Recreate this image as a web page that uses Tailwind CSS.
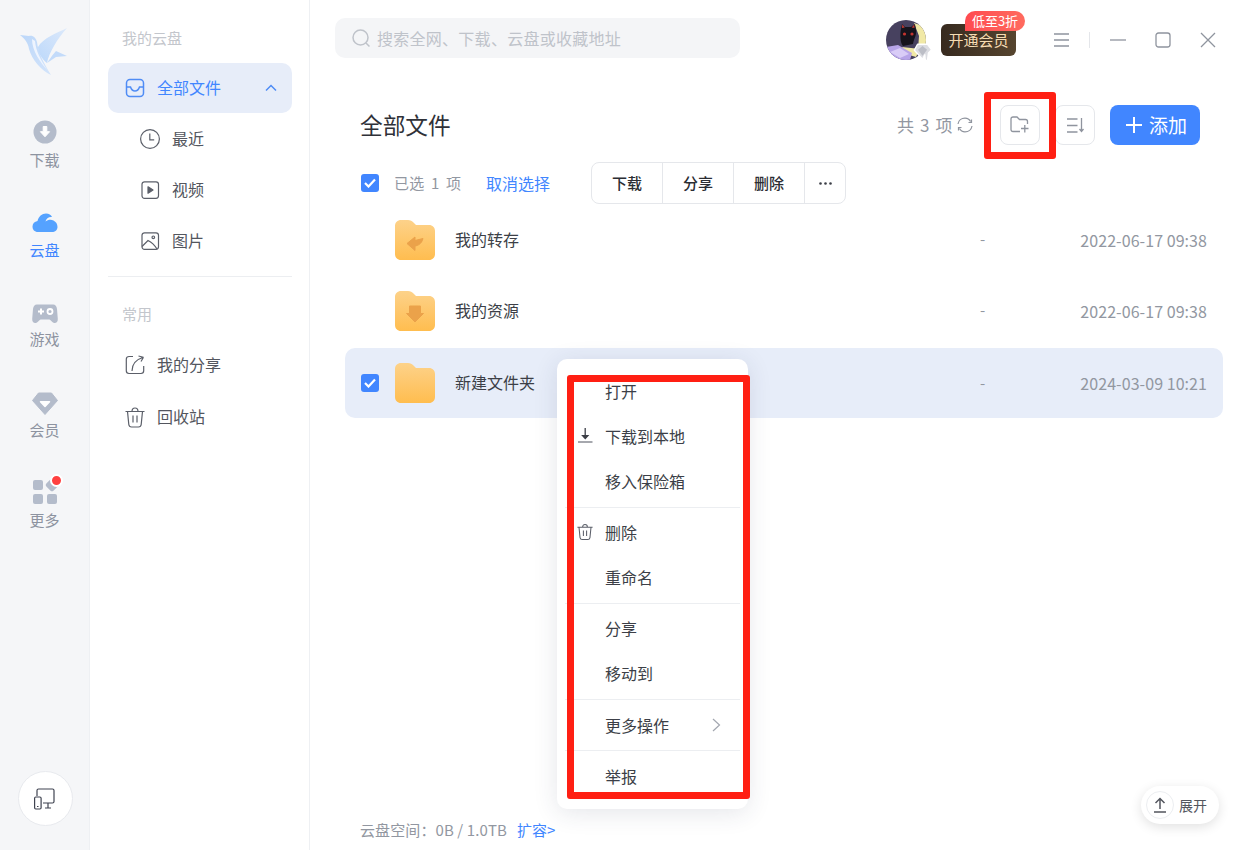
<!DOCTYPE html>
<html lang="zh-CN">
<head>
<meta charset="UTF-8">
<title>云盘</title>
<script src="https://cdn.jsdelivr.net/npm/@tailwindcss/browser@4"></script>
</head>
<body class="bg-white font-['Noto_Sans_CJK_SC','Liberation_Sans',sans-serif] text-[#3c3f47] overflow-hidden">
<div class="relative flex w-[1250px] h-[850px] overflow-hidden">

  <!-- Left rail -->
  <aside class="w-[90px] shrink-0 h-full bg-[#f5f6f8] border-r border-[#eef0f3] flex flex-col items-center">
    <svg class="mt-[27px] ml-[-1px]" width="50" height="50" viewBox="0 0 50 50">
      <defs>
        <linearGradient id="bw" x1="1" y1="0" x2="0" y2="1"><stop offset="0" stop-color="#dce9fb"/><stop offset="1" stop-color="#bcd8fa"/></linearGradient>
        <linearGradient id="bb" x1="0" y1="0" x2="1" y2="1"><stop offset="0" stop-color="#bcd7f9"/><stop offset="1" stop-color="#d3e4fb"/></linearGradient>
      </defs>
      <path d="M1 8 L10 9 C14 8 17 11 18 15 C19 25 25 37 32 48 C22 43 13 33 10 22 C9 16 6 12 1 8Z" fill="url(#bb)"/>
      <path d="M13 12 C13 24 21 35 29 44 C21 32 17 24 16 14Z" fill="#eef4fe"/>
      <path d="M48 1 C38 6 24 11 19 20 C19 26 23 32 28 36 C30 26 38 12 48 1Z" fill="url(#bw)"/>
      <path d="M28 36 C32 30 35 26 37 24 L48 29 L37 30 Z" fill="#c3dbfa"/>
    </svg>

    <a class="mt-[39px] w-full h-[90px] flex flex-col items-center text-[#8d93a0]">
      <svg class="mt-[4px]" width="24" height="24" viewBox="0 0 24 24"><circle cx="12" cy="12" r="11.500" fill="#b4bccb"/><path d="M10.200 6.500h3.600v5.200h2.800L12 16.800l-4.600-5.100h2.800z" fill="#fff" stroke="#fff" stroke-linejoin="round"/></svg>
      <span class="mt-[5px] text-[15px] leading-[22px]">下载</span>
    </a>
    <a class="w-full h-[90px] flex flex-col items-center text-[#4186ff]">
      <svg class="mt-[6px]" width="26" height="22" viewBox="0 0 26 22"><path d="M6 20 C2.500 20 0.500 17.500 0.500 14.500 C0.500 11.500 2.500 9.500 5.500 9 C6.500 4.500 10 1.500 14 1.500 C17 1.500 19 3 20 5 C17 4.500 14 6.500 13.500 9.500 C16 7.500 19 7 21.500 8.500 C24 9.800 25.500 12 25.500 15 C25.500 18 23 20 20 20Z" fill="#55a2ff"/></svg>
      <span class="mt-[5px] text-[15px] leading-[22px]">云盘</span>
    </a>
    <a class="w-full h-[90px] flex flex-col items-center text-[#8d93a0]">
      <svg class="mt-[7px]" width="26" height="22" viewBox="0 0 26 22"><path d="M5 1.500 H21 C23.500 1.500 24.500 3 25 6 L25.800 16 C26 19 24 20.500 22 20 C20 19.500 19 17 17.500 16.500 H8.500 C7 17 6 19.500 4 20 C2 20.500 0 19 .2 16 L1 6 C1.500 3 2.500 1.500 5 1.500Z" fill="#b4bccb"/><path d="M6 8.500h6M9 5.500v6" stroke="#fff" stroke-width="2"/><circle cx="18" cy="8.500" r="2.500" fill="none" stroke="#fff" stroke-width="1.800"/></svg>
      <span class="mt-[3px] text-[15px] leading-[22px]">游戏</span>
    </a>
    <a class="w-full h-[90px] flex flex-col items-center text-[#8d93a0]">
      <svg class="mt-[6px]" width="26" height="23" viewBox="0 0 26 23"><path d="M6.500 1 H19.500 L25.500 8.500 L13 22.500 L.5 8.500Z" fill="#b4bccb" stroke="#b4bccb" stroke-linejoin="round"/><path d="M13 14.500 L8.500 9.800 H17.500Z" fill="#fff" stroke="#fff" stroke-width="1.500" stroke-linejoin="round"/></svg>
      <span class="mt-[4px] text-[15px] leading-[22px]">会员</span>
    </a>
    <a class="w-full h-[90px] flex flex-col items-center text-[#8d93a0]">
      <div class="relative w-[24px] h-[24px] mt-[4px] grid grid-cols-2 gap-[4px]">
        <i class="block w-[10px] h-[10px] rounded-[2px] bg-[#b4bccb]"></i>
        <i class="block w-[10px] h-[10px] rounded-[2px] bg-[#b4bccb] rotate-45"></i>
        <i class="block w-[10px] h-[10px] rounded-[2px] bg-[#b4bccb]"></i>
        <i class="block w-[10px] h-[10px] rounded-[2px] bg-[#b4bccb]"></i>
        <b class="absolute right-[-6px] top-[-6px] w-[9px] h-[9px] rounded-full bg-[#ff4040] border-[2px] border-white box-content"></b>
      </div>
      <span class="mt-[5px] text-[15px] leading-[22px]">更多</span>
    </a>

    <div class="mt-auto mb-[24px] ml-[1px] w-[55px] h-[55px] rounded-full bg-white border border-[#e8eaee] flex items-center justify-center">
      <svg width="22" height="22" viewBox="0 0 22 22" fill="none" stroke="#3f4350" stroke-width="1.200"><path d="M3 8V2.500C3 1.700 3.600 1 4.500 1h14c.8 0 1.500.7 1.500 1.500v11c0 .8-.7 1.500-1.500 1.500H9"/><path d="M11 20h6M14 15v5"/><rect x="0.600" y="9" width="6.500" height="12" rx="1.200"/><path d="M3 18.500h1.500"/></svg>
    </div>
  </aside>

  <!-- Second sidebar -->
  <aside class="w-[220px] shrink-0 h-full border-r border-[#eef0f3] pl-[18px] pr-[17px]">
    <div class="h-[63px] pl-[14px] pt-[27px] text-[15px] leading-[22px] text-[#c3c6cc]">我的云盘</div>
    <a class="h-[50px] rounded-[10px] bg-[#e7edf9] flex items-center pl-[17px] pr-[15px] text-[#4186ff] text-[16px]">
      <svg width="20" height="20" viewBox="0 0 20 20" fill="none" stroke="#4f8cf5" stroke-width="1.500"><rect x="1.500" y="1.500" width="17" height="17" rx="3.500"/><path d="M1.500 9 H5.500 C6.500 12 8 13 10 13 C12 13 13.500 12 14.500 9 H18.500"/></svg>
      <span class="ml-[12px] pb-[2px] leading-[24px]">全部文件</span>
      <svg class="ml-auto" width="12" height="8" viewBox="0 0 12 8" fill="none" stroke="#4f8cf5" stroke-width="1.500"><path d="M1 6.500 L6 1.500 L11 6.500"/></svg>
    </a>
    <a class="h-[51px] flex items-center pl-[32px] text-[16px] text-[#53565e]">
      <svg width="20" height="20" viewBox="0 0 20 20" fill="none" stroke="#5b5f69" stroke-width="1.200"><circle cx="10" cy="10" r="9.400"/><path d="M9.800 4.500v6.300h4.400"/></svg>
      <span class="ml-[12px] pb-[2px] leading-[24px]">最近</span>
    </a>
    <a class="h-[51px] flex items-center pl-[32px] text-[16px] text-[#53565e]">
      <svg width="20" height="20" viewBox="0 0 20 20" fill="none" stroke="#5b5f69" stroke-width="1.200"><rect x="2" y="1.800" width="16.500" height="16.500" rx="2.500"/><path d="M8 6.800v6.400l5-3.200z" fill="#5b5f69" stroke-linejoin="round"/></svg>
      <span class="ml-[12px] pb-[2px] leading-[24px]">视频</span>
    </a>
    <a class="h-[51px] flex items-center pl-[32px] text-[16px] text-[#53565e]">
      <svg width="20" height="20" viewBox="0 0 20 20" fill="none" stroke="#5b5f69" stroke-width="1.200"><rect x="2" y="1.800" width="16.500" height="16.500" rx="2.500"/><circle cx="13.300" cy="6.300" r="1.300"/><path d="M2 15.500 L8 9.500 C11 11 14.500 14 17 18"/></svg>
      <span class="ml-[12px] pb-[2px] leading-[24px]">图片</span>
    </a>
    <div class="mt-[10px] h-px bg-[#eceef1]"></div>
    <div class="h-[62px] pl-[14px] pt-[26px] text-[15px] leading-[22px] text-[#c3c6cc]">常用</div>
    <a class="h-[52px] flex items-center pl-[17px] text-[16px] text-[#53565e]">
      <svg width="20" height="20" viewBox="0 0 20 20" fill="none" stroke="#5b5f69" stroke-width="1.200"><path d="M8 1.500H4C2.500 1.500 1.300 2.700 1.300 4.200V15.800C1.300 17.300 2.500 18.500 4 18.500H16C17.500 18.500 18.700 17.300 18.700 15.800V11"/><path d="M7 16C7 10 9.500 5 18.500 2.300M18.500 2.300L13.500 1M18.500 2.300L16 6.500"/></svg>
      <span class="ml-[12px] pb-[2px] leading-[24px]">我的分享</span>
    </a>
    <a class="h-[52px] flex items-center pl-[17px] text-[16px] text-[#53565e]">
      <svg width="20" height="21" viewBox="0 0 20 21" fill="none" stroke="#5b5f69" stroke-width="1.200"><path d="M.5 4.500h19M7 4.500C7 2.500 8 1 10 1s3 1.500 3 3.500M2.500 4.500 L3.800 17.500C4 19 5 20 6.500 20h7c1.500 0 2.500-1 2.700-2.500L17.500 4.500M8 8.500v7M12 8.500v7"/></svg>
      <span class="ml-[12px] pb-[2px] leading-[24px]">回收站</span>
    </a>
  </aside>

  <!-- Main -->
  <main class="flex-1 flex flex-col h-full min-w-0">
    <!-- Top bar -->
    <div class="h-[80px] flex items-start pt-[18px] pl-[25px]">
      <div class="w-[405px] h-[40px] rounded-[10px] bg-[#f4f5f7] flex items-center pl-[17px] text-[16px] text-[#bfc3ca]">
        <svg width="19" height="19" viewBox="0 0 19 19" fill="none" stroke="#bfc3ca" stroke-width="1.500"><circle cx="8.500" cy="8.500" r="7.500"/><path d="M14 14l3.500 3.500"/></svg>
        <span class="ml-[6px] leading-[24px] tracking-[0.27px]">搜索全网、下载、云盘或收藏地址</span>
      </div>
      <div class="relative ml-[146px] mt-[2px] w-[40px] h-[40px] shrink-0">
        <svg width="40" height="40" viewBox="0 0 40 40">
          <clipPath id="av"><circle cx="20" cy="20" r="20"/></clipPath>
          <g clip-path="url(#av)">
            <rect width="40" height="40" fill="#47415f"/>
            <path d="M28 3 L40 7 V32 L32 30 L33 16Z" fill="#f1e9a6"/>
            <path d="M16 27 L34 29 L30 37 L20 34Z" fill="#f1e9a6"/>
            <path d="M0 27 L12 25 L26 33 L24 40 H0Z" fill="#b7a4e8"/>
            <path d="M4 32 L14 28 L23 34 L14 38Z" fill="#d9ccf7"/>
            <path d="M15 9 L16 4 L19 7 H25 L29 4 L30 10 C31 15 28 18 27 24 L17 26 C14 23 14 14 15 9Z" fill="#16131c"/>
            <circle cx="18.500" cy="14" r="1.600" fill="#c4342f"/><circle cx="26" cy="14" r="1.600" fill="#c4342f"/>
            <path d="M16 8l.3-3.500 2.500 3zM28.500 8l-.3-3.500-2.500 3z" fill="#c03a34"/>
          </g>
        </svg>
        <svg class="absolute left-[27px] top-[22px]" width="20" height="20" viewBox="0 0 22 22"><path d="M5 2.500 H16 L20.500 8.500 L17 12 L16 20 L13.500 20.500 L13 14 L10.500 19 L1.500 9Z" fill="#dcdde2" stroke="#fff" stroke-width="1.500" stroke-linejoin="round"/><path d="M5.500 8.500 L10.500 4.500 L15.500 8.500 L10.500 15Z" fill="#bcbec6"/></svg>
      </div>
      <div class="relative ml-[15px] mt-[6px] w-[75px] h-[32px] shrink-0 rounded-[6px] bg-gradient-to-r from-[#372a1f] to-[#56452f] flex items-center justify-center text-[15px] text-[#f6dcb3]">
        <span class="leading-[22px]">开通会员</span>
        <span class="absolute left-[24px] top-[-13px] w-[60px] h-[20px] rounded-full rounded-bl-none bg-gradient-to-r from-[#ff4a50] to-[#ff6a5e] text-white text-[13px] leading-[20px] text-center">低至3折</span>
      </div>
      <!-- Window controls -->
      <div class="ml-[38px] mt-[14px] flex items-center text-[#8f949e]">
        <svg width="15" height="14" viewBox="0 0 15 14" stroke="#8f949e" stroke-width="1.300"><path d="M0 1h15M0 7h15M0 13h15"/></svg>
        <i class="block ml-[20px] w-px h-[16px] bg-[#e4e6ea]"></i>
        <svg class="ml-[20px]" width="16" height="2" viewBox="0 0 16 2" stroke="#8f949e" stroke-width="1.300"><path d="M0 1h16"/></svg>
        <svg class="ml-[29px]" width="16" height="16" viewBox="0 0 16 16" fill="none" stroke="#8f949e" stroke-width="1.300"><rect x="1" y="1" width="14" height="14" rx="2.500"/></svg>
        <svg class="ml-[29px]" width="16" height="16" viewBox="0 0 16 16" stroke="#8f949e" stroke-width="1.300"><path d="M1 1l14 14M15 1L1 15"/></svg>
      </div>
    </div>

    <!-- Title row -->
    <div class="h-[40px] mt-[25px] flex items-center pl-[50px]">
      <h1 class="text-[22.700px] leading-[32px] font-normal text-[#2f3138]">全部文件</h1>
      <span class="ml-auto text-[17px] leading-[24px] text-[#9297a1] tracking-[0.4px] [word-spacing:1.500px]">共 3 项</span>
      <svg class="ml-[4px]" width="16" height="16" viewBox="0 0 16 16" fill="none" stroke="#8f949e" stroke-width="1.200"><path d="M1 7C1.500 3.500 4.500 1.200 8 1.200c2.500 0 4.500 1.300 5.500 3.300M15 9c-.5 3.500-3.500 5.800-7 5.800-2.500 0-4.500-1.300-5.500-3.300M11.500 5.500h3V2.500M4.500 10.500h-3v3"/></svg>
      <button class="ml-[27px] w-[40px] h-[40px] rounded-[8px] border border-[#e5e7eb] flex items-center justify-center">
        <svg width="20" height="18" viewBox="0 0 20 18" fill="none" stroke="#8f949e" stroke-width="1.300"><path d="M10 15.500H3C1.800 15.500 1 14.700 1 13.500V3C1 1.800 1.800 1 3 1H7L9.500 3.500H15.500C16.700 3.500 17.500 4.300 17.500 5.500V8"/><path d="M11 12.500h7.500M14.800 9v7.500"/></svg>
      </button>
      <button class="ml-[15px] w-[40px] h-[40px] rounded-[8px] border border-[#e5e7eb] flex items-center justify-center">
        <svg width="17" height="15" viewBox="0 0 17 15" fill="none" stroke="#8f949e" stroke-width="1.300"><path d="M0 1h10.500M0 7.500h10.500M0 14h10.500M14.500 0v13.500M12.500 11l2 2.500 2-2.500"/></svg>
      </button>
      <button class="ml-[15px] mr-[50px] w-[90px] h-[40px] pl-[3px] rounded-[8px] bg-[#4186ff] flex items-center justify-center text-white text-[19px]">
        <svg width="16" height="16" viewBox="0 0 16 16" stroke="#fff" stroke-width="2"><path d="M0 8h16M8 0v16"/></svg>
        <span class="ml-[7px] leading-[26px]">添加</span>
      </button>
    </div>

    <!-- Selection bar -->
    <div class="h-[42px] mt-[17px] flex items-center pl-[51px]">
      <span class="w-[18px] h-[18px] rounded-[3px] bg-[#4186ff] flex items-center justify-center">
        <svg width="12" height="10" viewBox="0 0 12 10" fill="none" stroke="#fff" stroke-width="2.200"><path d="M1 5l3.500 3.500L11 1.500"/></svg>
      </span>
      <span class="ml-[15px] w-[92px] text-[15px] leading-[22px] text-[#9297a1] tracking-[0.2px] [word-spacing:3px]">已选 1 项</span>
      <a class="text-[#4186ff] text-[16px] leading-[24px] w-[105px]">取消选择</a>
      <div class="flex h-[42px] w-[255px] rounded-[8px] border border-[#e5e7eb] text-[15px] font-medium text-[#2b2d33]">
        <span class="w-[71px] flex items-center justify-center border-r border-[#e5e7eb]">下载</span>
        <span class="w-[71px] flex items-center justify-center border-r border-[#e5e7eb]">分享</span>
        <span class="w-[71px] flex items-center justify-center border-r border-[#e5e7eb]">删除</span>
        <span class="flex-1 flex items-center justify-center">
          <svg width="13" height="3" viewBox="0 0 13 3" fill="#3c3f47"><circle cx="1.500" cy="1.500" r="1.300"/><circle cx="6.500" cy="1.500" r="1.300"/><circle cx="11.500" cy="1.500" r="1.300"/></svg>
        </span>
      </div>
    </div>

    <!-- File list -->
    <div class="ml-[35px] mr-[27px]">
      <div class="h-[71px] flex items-center pl-[50px] pr-[16px]">
        <svg width="40" height="40" viewBox="0 0 40 40"><defs><linearGradient id="fd" x1="0" y1="0" x2="0" y2="1"><stop offset="0" stop-color="#fdd28a"/><stop offset="1" stop-color="#ffbd4f"/></linearGradient></defs><path d="M0 6C0 2.500 2.500 0 6 0H13C15.500 0 17 1 18.500 2.500L21 5H34C37.500 5 40 7.500 40 11V34C40 37.500 37.500 40 34 40H6C2.500 40 0 37.500 0 34Z" fill="url(#fd)"/><path d="M12 23.500L20 17V20.500L28 18.500C26.500 24 23 25.500 20 26V30.500Z" fill="#eba24a" stroke="#eba24a" stroke-linejoin="round"/></svg>
        <span class="ml-[20px] pb-[2px] text-[16px] leading-[24px]">我的转存</span>
        <span class="ml-auto text-[15px] text-[#9297a1]">-</span>
        <span class="ml-[95px] text-[16px] tracking-[0.06px] leading-[22px] text-[#9297a1]">2022-06-17 09:38</span>
      </div>
      <div class="h-[71px] flex items-center pl-[50px] pr-[16px]">
        <svg width="40" height="40" viewBox="0 0 40 40"><path d="M0 6C0 2.500 2.500 0 6 0H13C15.500 0 17 1 18.500 2.500L21 5H34C37.500 5 40 7.500 40 11V34C40 37.500 37.500 40 34 40H6C2.500 40 0 37.500 0 34Z" fill="url(#fd)"/><path d="M14.500 15H25.500V22.500H28.500L20 31L11.500 22.500H14.500Z" fill="#eba24a" stroke="#eba24a" stroke-linejoin="round"/></svg>
        <span class="ml-[20px] pb-[2px] text-[16px] leading-[24px]">我的资源</span>
        <span class="ml-auto text-[15px] text-[#9297a1]">-</span>
        <span class="ml-[95px] text-[16px] tracking-[0.06px] leading-[22px] text-[#9297a1]">2022-06-17 09:38</span>
      </div>
      <div class="h-[70px] mt-[2px] rounded-[10px] bg-[#e7edf9] flex items-center pl-[16px] pr-[16px]">
        <span class="w-[18px] h-[18px] rounded-[3px] bg-[#4186ff] flex items-center justify-center">
          <svg width="12" height="10" viewBox="0 0 12 10" fill="none" stroke="#fff" stroke-width="2.200"><path d="M1 5l3.500 3.500L11 1.500"/></svg>
        </span>
        <svg class="ml-[16px]" width="40" height="40" viewBox="0 0 40 40"><path d="M0 6C0 2.500 2.500 0 6 0H13C15.500 0 17 1 18.500 2.500L21 5H34C37.500 5 40 7.500 40 11V34C40 37.500 37.500 40 34 40H6C2.500 40 0 37.500 0 34Z" fill="url(#fd)"/></svg>
        <span class="ml-[20px] pb-[2px] text-[16px] leading-[24px]">新建文件夹</span>
        <span class="ml-auto text-[15px] text-[#9297a1]">-</span>
        <span class="ml-[95px] text-[16px] tracking-[0.06px] leading-[22px] text-[#9297a1]">2024-03-09 10:21</span>
      </div>
    </div>

    <!-- Footer -->
    <div class="mt-auto mb-[10px] pl-[50px] flex items-center text-[15px] leading-[20px] text-[#9297a1]">
      <span class="tracking-[0.1px]">云盘空间：0B / 1.0TB</span>
      <a class="ml-[10px] text-[#4186ff]">扩容&gt;</a>
    </div>
  </main>

  <!-- Expand pill -->
  <div class="absolute left-[1141px] top-[786px] w-[78px] h-[38px] rounded-full bg-white shadow-[0_3px_12px_rgba(0,0,0,0.12)] flex items-center pl-[5px] text-[14px] text-[#53565e]">
    <span class="w-[28px] h-[28px] rounded-full border border-[#eceef1] flex items-center justify-center">
      <svg width="14" height="16" viewBox="0 0 14 16" fill="none" stroke="#53565e" stroke-width="1.500"><path d="M7 12V1.500M2.500 6L7 1.500 11.500 6M1 15h12"/></svg>
    </span>
    <span class="ml-[5px] leading-[20px]">展开</span>
  </div>

  <!-- Context menu -->
  <div class="absolute left-[557px] top-[359px] w-[191px] h-[450px] rounded-[10px] bg-white shadow-[0_4px_24px_rgba(40,50,80,0.12)] pt-[11px] text-[16px] text-[#3c3f47]">
    <div class="h-[45px] flex items-center pl-[48px] pb-[4px]">打开</div>
    <div class="relative h-[45px] flex items-center pl-[48px] pb-[4px]">
      <svg class="absolute left-[21px] top-[13px]" width="15" height="15" viewBox="0 0 15 15" fill="none" stroke="#3c3f47" stroke-width="1.200"><path d="M0 14h14.500" stroke="#6b6f78"/><path d="M7.200 0v8" stroke-width="1.300"/><path d="M4.500 7.500h5.500l-2.750 3z" fill="#3c3f47"/></svg>
      下载到本地
    </div>
    <div class="h-[45px] flex items-center pl-[48px] pb-[4px]">移入保险箱</div>
    <div class="mx-[8px] mt-[2px] mb-[3px] h-px bg-[#eceef1]"></div>
    <div class="relative h-[45px] flex items-center pl-[48px] pb-[4px]">
      <svg class="absolute left-[20px] top-[12px]" width="16" height="18" viewBox="0 0 20 21" fill="none" stroke="#5b5f69" stroke-width="1.300"><path d="M.5 4.500h19M7 4.500C7 2.500 8 1 10 1s3 1.500 3 3.500M2.500 4.500 L3.800 17.500C4 19 5 20 6.500 20h7c1.500 0 2.500-1 2.700-2.500L17.500 4.500M8 8.500v7M12 8.500v7"/></svg>
      删除
    </div>
    <div class="h-[45px] flex items-center pl-[48px] pb-[4px]">重命名</div>
    <div class="mx-[8px] mt-[2px] mb-[3px] h-px bg-[#eceef1]"></div>
    <div class="h-[45px] flex items-center pl-[48px] pb-[4px]">分享</div>
    <div class="h-[45px] flex items-center pl-[48px] pb-[4px]">移动到</div>
    <div class="mx-[8px] mt-[2px] mb-[3px] h-px bg-[#eceef1]"></div>
    <div class="h-[45px] flex items-center pl-[48px] pr-[27px] pb-[2px]">
      更多操作
      <svg class="ml-auto" width="9" height="14" viewBox="0 0 9 14" fill="none" stroke="#a3a7b0" stroke-width="1.200"><path d="M1 1l6.500 6L1 13"/></svg>
    </div>
    <div class="mx-[8px] mt-[2px] mb-[3px] h-px bg-[#eceef1]"></div>
    <div class="h-[45px] flex items-center pl-[48px] pb-[2px]">举报</div>
  </div>

  <!-- Red annotation boxes -->
  <div class="absolute left-[984px] top-[92px] w-[72px] h-[67px] border-[7px] border-[#ff1f13] rounded-[3px]"></div>
  <div class="absolute left-[567px] top-[375px] w-[183px] h-[424px] border-[7px] border-[#ff1f13] rounded-[3px]"></div>
</div>
</body>
</html>
